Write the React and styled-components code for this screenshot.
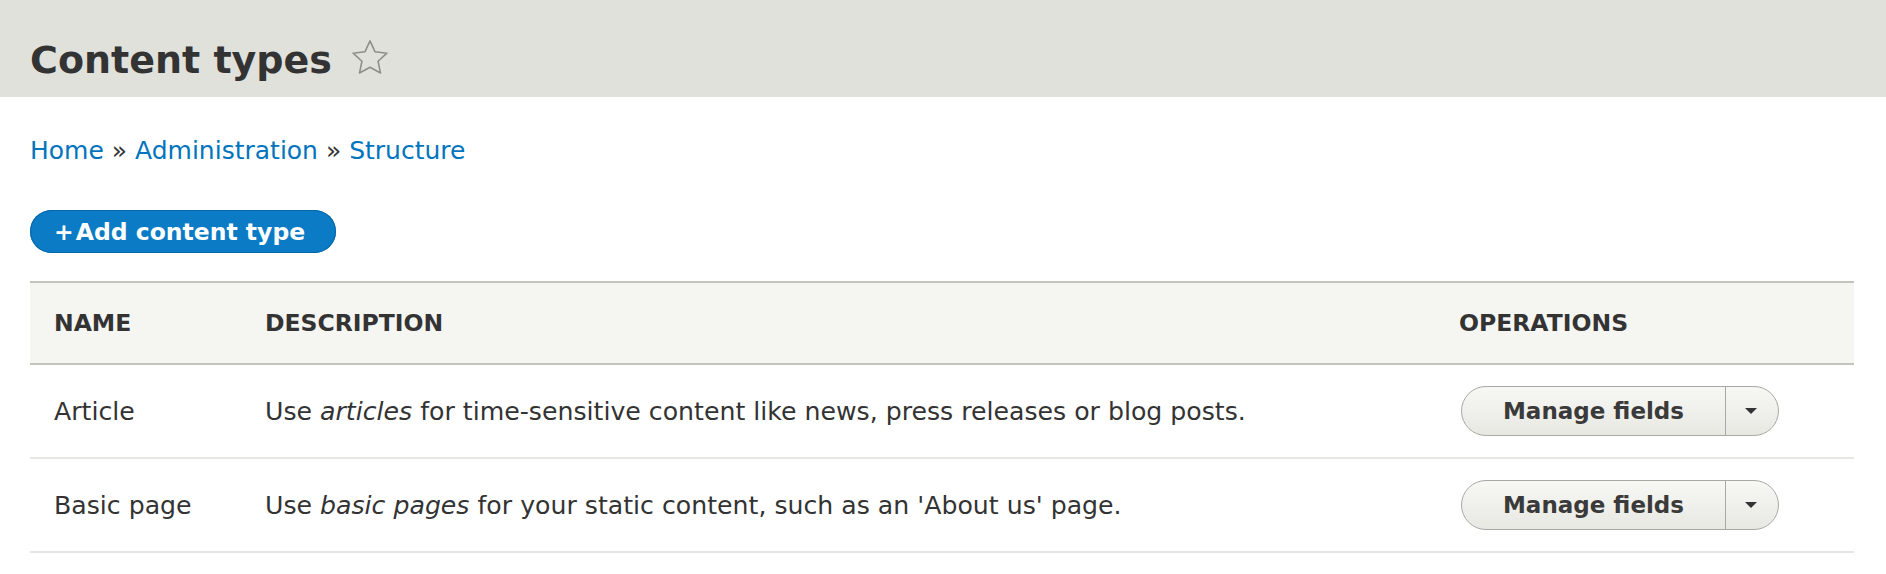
import React from "react";
import styled, { createGlobalStyle } from "styled-components";

const contentTypes = [
  {
    name: "Article",
    lead: "Use ",
    em: "articles",
    rest: " for time-sensitive content like news, press releases or blog posts.",
  },
  {
    name: "Basic page",
    lead: "Use ",
    em: "basic pages",
    rest: " for your static content, such as an 'About us' page.",
  },
];

const App = () => {
  return (
    <>
      <GlobalStyle />
      <Page>
        <Header>
          <Title>Content types</Title>
          <StarButton aria-label="Add to shortcuts">
            <svg width="38" height="38" viewBox="0 0 24 24">
              <path
                d="M12 1.2l3.2 6.9 7.5.85-5.6 5.1 1.55 7.45L12 17.8l-6.65 3.7 1.55-7.45-5.6-5.1 7.5-.85z"
                fill="none"
                stroke="#8f8f8a"
                strokeWidth="1"
                strokeLinejoin="round"
              />
            </svg>
          </StarButton>
        </Header>

        <Content>
          <Breadcrumb>
            <a href="#">Home</a> » <a href="#">Administration</a> » <a href="#">Structure</a>
          </Breadcrumb>

          <ActionButton href="#">
            <span>+</span>Add content type
          </ActionButton>

          <Table>
            <colgroup>
              <col style={{ width: 211 }} />
              <col style={{ width: 1194 }} />
              <col />
            </colgroup>
            <thead>
              <tr>
                <Th>Name</Th>
                <Th>Description</Th>
                <Th>Operations</Th>
              </tr>
            </thead>
            <tbody>
              {contentTypes.map((type) => (
                <tr key={type.name}>
                  <Td>{type.name}</Td>
                  <Td>
                    {type.lead}
                    <em>{type.em}</em>
                    {type.rest}
                  </Td>
                  <Td>
                    <DropButton>
                      <DropMain>Manage fields</DropMain>
                      <DropToggle aria-label="List additional actions">
                        <Arrow />
                      </DropToggle>
                    </DropButton>
                  </Td>
                </tr>
              ))}
            </tbody>
          </Table>
        </Content>
      </Page>
    </>
  );
};

export default App;

const GlobalStyle = createGlobalStyle`
  body {
    margin: 0;
    background: #ffffff;
    font-family: "DejaVu Sans", "Liberation Sans", sans-serif;
    color: #333333;
  }
`;

const Page = styled.div`
  width: 1886px;
`;

const Header = styled.header`
  display: flex;
  align-items: flex-start;
  height: 97px;
  box-sizing: border-box;
  padding: 41px 0 0 30px;
  background: #e1e1dc;
`;

const Title = styled.h1`
  margin: 0;
  font-size: 38px;
  line-height: 1;
  font-weight: bold;
  color: #333333;
`;

const StarButton = styled.span`
  display: inline-flex;
  margin: -2px 0 0 19px;
`;

const Content = styled.main`
  padding: 41px 32px 0 30px;
`;

const Breadcrumb = styled.nav`
  font-size: 25px;
  line-height: 1;
  color: #333333;

  a {
    color: #0074bd;
    text-decoration: none;
  }
`;

const ActionButton = styled.a`
  display: inline-flex;
  align-items: center;
  height: 43px;
  box-sizing: border-box;
  margin-top: 47px;
  padding: 0 31px 0 24px;
  border-radius: 22px;
  background: #0a7bc4;
  box-shadow: inset 0 0 0 1px #0567a8;
  color: #ffffff;
  font-size: 23.5px;
  font-weight: bold;
  text-decoration: none;

  span {
    margin-right: 2px;
  }
`;

const Table = styled.table`
  width: 1824px;
  margin-top: 28px;
  border-collapse: collapse;
  table-layout: fixed;
`;

const Th = styled.th`
  height: 80px;
  padding: 0 0 0 24px;
  background: #f5f5f2;
  border-top: 2px solid #c4c4bf;
  border-bottom: 2px solid #c4c4bf;
  text-align: left;
  text-transform: uppercase;
  font-size: 23.5px;
  font-weight: bold;
  color: #333333;
`;

const Td = styled.td`
  height: 92px;
  padding: 0 0 0 24px;
  border-bottom: 2px solid #e6e6e2;
  font-size: 25.2px;
  color: #333333;
  vertical-align: middle;

  em {
    font-style: italic;
  }
`;

const DropButton = styled.div`
  display: inline-flex;
  height: 50px;
  box-sizing: border-box;
  margin-left: 2px;
  border: 1px solid #a8a8a4;
  border-radius: 25px;
  overflow: hidden;
  background: linear-gradient(to bottom, #f7f7f4, #e8e8e3);
`;

const DropMain = styled.span`
  display: flex;
  align-items: center;
  justify-content: center;
  width: 263px;
  font-size: 23px;
  font-weight: bold;
  color: #3a3a3a;
`;

const DropToggle = styled.span`
  display: flex;
  align-items: center;
  justify-content: center;
  width: 50px;
  border-left: 1px solid #a8a8a4;
  padding-right: 2px;
`;

const Arrow = styled.span`
  width: 0;
  height: 0;
  border-left: 6px solid transparent;
  border-right: 6px solid transparent;
  border-top: 6px solid #333333;
`;
